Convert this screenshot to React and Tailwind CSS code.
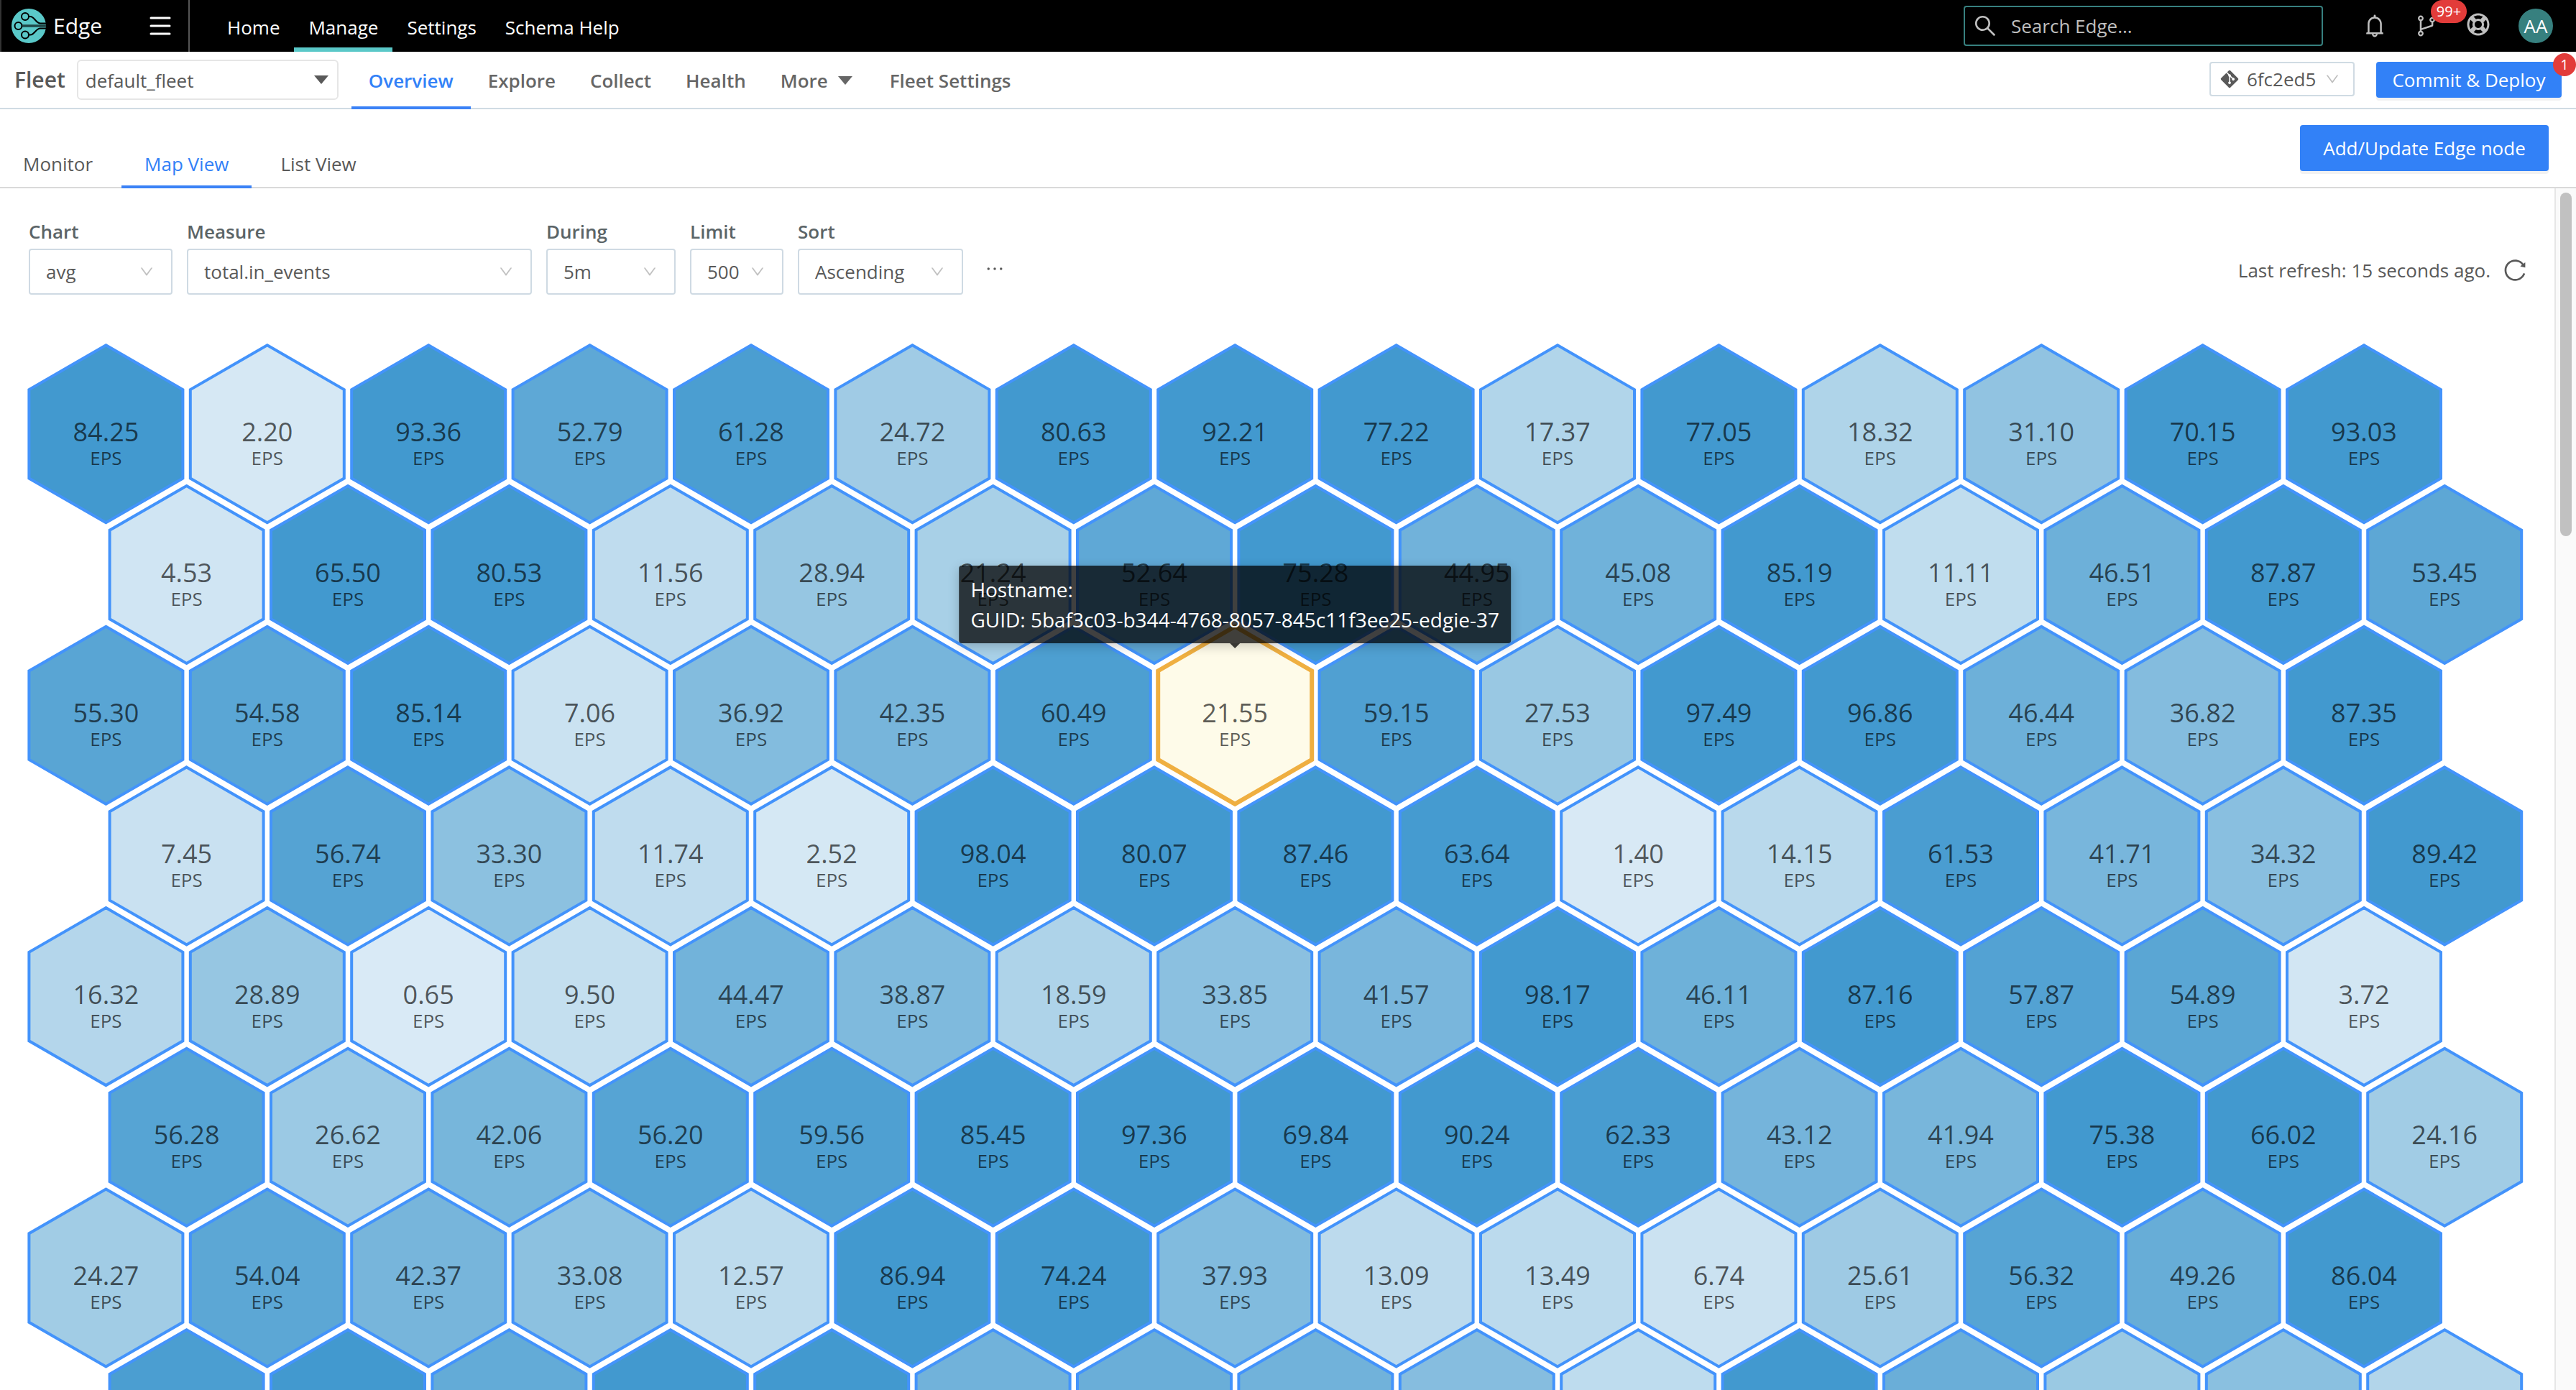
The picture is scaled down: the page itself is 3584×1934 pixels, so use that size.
import {
  AiOutlineBell,
  AiOutlineBranches,
  AiOutlineDown,
  AiOutlineEllipsis,
  AiOutlineReload,
  AiOutlineSearch,
} from 'react-icons/ai'
import { FaGitAlt, FaRegLifeRing } from 'react-icons/fa'

const NAV = ['Home', 'Manage', 'Settings', 'Schema Help']

const FLEET_TABS = ['Overview', 'Explore', 'Collect', 'Health']

const VIEW_TABS = ['Monitor', 'Map View', 'List View']

const FILTERS = [
  { id: 'chart', label: 'Chart', value: 'avg', width: 'w-[200px]' },
  { id: 'measure', label: 'Measure', value: 'total.in_events', width: 'w-[480px]' },
  { id: 'during', label: 'During', value: '5m', width: 'w-[180px]' },
  { id: 'limit', label: 'Limit', value: '500', width: 'w-[130px]' },
  { id: 'sort', label: 'Sort', value: 'Ascending', width: 'w-[230px]' },
]

const NODES = [
  [84.25, 2.2, 93.36, 52.79, 61.28, 24.72, 80.63, 92.21, 77.22, 17.37, 77.05, 18.32, 31.1, 70.15, 93.03],
  [4.53, 65.5, 80.53, 11.56, 28.94, 21.24, 52.64, 75.28, 44.95, 45.08, 85.19, 11.11, 46.51, 87.87, 53.45],
  [55.3, 54.58, 85.14, 7.06, 36.92, 42.35, 60.49, 21.55, 59.15, 27.53, 97.49, 96.86, 46.44, 36.82, 87.35],
  [7.45, 56.74, 33.3, 11.74, 2.52, 98.04, 80.07, 87.46, 63.64, 1.4, 14.15, 61.53, 41.71, 34.32, 89.42],
  [16.32, 28.89, 0.65, 9.5, 44.47, 38.87, 18.59, 33.85, 41.57, 98.17, 46.11, 87.16, 57.87, 54.89, 3.72],
  [56.28, 26.62, 42.06, 56.2, 59.56, 85.45, 97.36, 69.84, 90.24, 62.33, 43.12, 41.94, 75.38, 66.02, 24.16],
  [24.27, 54.04, 42.37, 33.08, 12.57, 86.94, 74.24, 37.93, 13.09, 13.49, 6.74, 25.61, 56.32, 49.26, 86.04],
]

// next row only peeks in below the fold, so it is drawn without labels
const PEEK_ROW = [61, 80, 51, 85, 67, 45, 48, 45, 36, 12, 78, 48, 27, 34, 17]

const ACTIVE = { row: 2, col: 7 }

// map geometry, in viewBox units
const COL_STEP = 224.4
const ROW_STEP = 195.7
const HALF_W = 107
const RADIUS = 123.5
const MAP_W = 3473
const MAP_H = 1630

const COLOR_STOPS = [
  [0, [219, 235, 246]],
  [24.2, [161, 204, 229]],
  [65, [66, 153, 207]],
]

function colorFor(value) {
  const last = COLOR_STOPS[COLOR_STOPS.length - 1]
  if (value >= last[0]) return `rgb(${last[1].join(',')})`
  const i = COLOR_STOPS.findIndex(([stop]) => stop > value)
  const [from, a] = COLOR_STOPS[i - 1]
  const [to, b] = COLOR_STOPS[i]
  const t = (value - from) / (to - from)
  return `rgb(${a.map((c, k) => Math.round(c + (b[k] - c) * t)).join(',')})`
}

function centerOf(row, col) {
  return {
    x: 109.4 + (row % 2) * (COL_STEP / 2) + col * COL_STEP,
    y: 125.8 + row * ROW_STEP,
  }
}

function hexPoints(x, y) {
  const h = RADIUS / 2
  return [
    [x, y - RADIUS],
    [x + HALF_W, y - h],
    [x + HALF_W, y + h],
    [x, y + RADIUS],
    [x - HALF_W, y + h],
    [x - HALF_W, y - h],
  ]
    .map((p) => p.join(','))
    .join(' ')
}

function Hexagon({ value, row, col, labelled = true }) {
  const { x, y } = centerOf(row, col)
  const active = row === ACTIVE.row && col === ACTIVE.col
  return (
    <g>
      <polygon
        points={hexPoints(x, y)}
        fill={active ? '#fefbe9' : colorFor(value)}
        stroke={active ? '#efaf41' : '#4393fb'}
        strokeWidth={active ? 6 : 4}
      />
      {labelled && (
        <>
          <text x={x} y={y + 10} textAnchor="middle" fontSize="36" fillOpacity="0.65">
            {value.toFixed(2)}
          </text>
          <text x={x} y={y + 43} textAnchor="middle" fontSize="26" fillOpacity="0.65">
            EPS
          </text>
        </>
      )}
    </g>
  )
}

function NodeMap() {
  const anchor = centerOf(ACTIVE.row, ACTIVE.col)
  return (
    <div className="relative">
      <svg
        viewBox={`0 0 ${MAP_W} ${MAP_H}`}
        className="block w-full"
        role="img"
        aria-label="Edge nodes by events per second"
      >
        {NODES.map((values, row) =>
          values.map((value, col) => <Hexagon key={`${row}-${col}`} value={value} row={row} col={col} />)
        )}
        {PEEK_ROW.map((value, col) => (
          <Hexagon key={col} value={value} row={NODES.length} col={col} labelled={false} />
        ))}
      </svg>
      <div
        role="tooltip"
        className="absolute flex -translate-x-1/2 -translate-y-full flex-col items-center"
        style={{
          left: `${(anchor.x / MAP_W) * 100}%`,
          top: `${((anchor.y - 93) / MAP_H) * 100}%`,
        }}
      >
        <div className="rounded-sm bg-black/75 px-4 py-3 text-[28px] leading-[42px] whitespace-nowrap text-white shadow-[0_4px_16px_rgba(0,0,0,0.2)]">
          <p>Hostname:</p>
          <p>GUID: 5baf3c03-b344-4768-8057-845c11f3ee25-edgie-37</p>
        </div>
        <svg viewBox="0 0 14 7" className="h-[7px] w-3.5">
          <path d="M0 0h14L7 7z" fill="#000" fillOpacity="0.75" />
        </svg>
      </div>
    </div>
  )
}

function Logo() {
  return (
    <svg viewBox="0 0 48 48" className="size-12" aria-hidden="true">
      <circle cx="24" cy="24" r="24" fill="#5ac8c8" />
      <g fill="none" stroke="#000" strokeWidth="2">
        <circle cx="19" cy="11" r="5" />
        <circle cx="9.500" cy="24" r="5" />
        <circle cx="19" cy="36.500" r="5" />
        <path d="M24 11h2c6 0 8 9.500 14 9.500h8" />
        <path d="M24 36.500h2c6 0 8-9 14-9h8" />
      </g>
      <path d="M14.500 22.500H48v3H14.500z" />
      <path d="M15 24h33" stroke="#3f8f8f" strokeWidth="1" />
    </svg>
  )
}

function Caret({ className }) {
  return (
    <svg viewBox="0 0 20 12" className={className} aria-hidden="true">
      <path d="M0 0h20L10 12z" fill="currentColor" />
    </svg>
  )
}

function TopBar() {
  return (
    <header className="flex h-[72px] shrink-0 items-center bg-black pr-8 text-white">
      <div className="flex h-full w-[264px] items-center border-r-2 border-l-2 border-[#555] border-l-[#333] pr-6 pl-3.5">
        <Logo />
        <span className="ml-2.5 text-[30px]">Edge</span>
        <button type="button" aria-label="Menu" className="ml-auto">
          <svg viewBox="0 0 30 26" className="h-[26px] w-[30px]" stroke="#fff" strokeWidth="3" strokeLinecap="round">
            <path d="M2 2h26M2 13h26M2 24h26" />
          </svg>
        </button>
      </div>
      <nav className="ml-8 flex h-full">
        {NAV.map((item) => (
          <a
            key={item}
            href="#"
            className={`flex items-center border-y-6 border-t-transparent px-5 ${
              item === 'Manage' ? 'border-b-[#5ac8c8]' : 'border-b-transparent'
            }`}
          >
            <span className="pt-1">{item}</span>
          </a>
        ))}
      </nav>
      <label className="ml-auto flex h-14 w-[500px] items-center gap-[18px] rounded-sm border-2 border-[#37807f] pl-2.5 text-[#bfbfbf]">
        <AiOutlineSearch className="size-9" />
        <input
          type="search"
          aria-label="Search Edge"
          placeholder="Search Edge..."
          className="min-w-0 flex-1 outline-none placeholder:text-[#bfbfbf]"
        />
      </label>
      <div className="ml-14 flex items-center gap-10 text-[#bfbfbf]">
        <button type="button" aria-label="Notifications" className="flex size-8 items-center justify-center">
          <AiOutlineBell className="size-9 shrink-0" />
        </button>
        <button type="button" aria-label="Changes" className="relative flex size-8 items-center justify-center">
          <AiOutlineBranches className="size-9 shrink-0" />
          <span className="absolute -top-5 left-[22px] flex h-8 w-[50px] items-center justify-center rounded-full bg-[#e23c3a] text-xl text-white">
            99+
          </span>
        </button>
        <button type="button" aria-label="Help" className="flex size-8 items-center justify-center pb-1">
          <FaRegLifeRing className="size-8 shrink-0" />
        </button>
        <button type="button" className="flex size-12 items-center justify-center rounded-full bg-[#37807f] text-white">
          AA
        </button>
      </div>
    </header>
  )
}

function FleetBar() {
  return (
    <div className="flex h-20 shrink-0 items-stretch border-b-2 border-[#d0dbe3] pr-5 pl-5">
      <label htmlFor="fleet" className="flex items-center text-[30px] font-semibold">
        Fleet
      </label>
      <div className="relative my-auto ml-4">
        <select
          id="fleet"
          className="h-14 w-[364px] appearance-none rounded-md border-2 border-[#e6e6e6] bg-white pt-0.5 pl-2.5"
        >
          <option>default_fleet</option>
        </select>
        <Caret className="pointer-events-none absolute top-[22px] right-3.5 h-3 w-5" />
      </div>
      <nav className="-mb-0.5 ml-[18px] flex font-semibold text-[#666]">
        {FLEET_TABS.map((tab) => (
          <a
            key={tab}
            href="#"
            className={`flex items-center border-y-4 border-t-transparent px-6 ${
              tab === 'Overview' ? 'border-b-[#3b82f6] text-[#3281f7]' : 'border-b-transparent'
            }`}
          >
            {tab}
          </a>
        ))}
        <button type="button" className="flex items-center gap-3.5 px-6 font-semibold">
          More
          <Caret className="h-3 w-5" />
        </button>
        <a href="#" className="ml-1 flex items-center px-6">
          Fleet Settings
        </a>
      </nav>
      <div className="mt-3.5 ml-auto flex items-start gap-[30px]">
        <button type="button" className="flex h-12 w-[202px] items-center rounded-sm border-2 border-[#d0dbe3] pl-3">
          <FaGitAlt className="size-7" />
          <span className="ml-2.5">6fc2ed5</span>
          <AiOutlineDown className="ml-3 size-[22px] text-[#bfbfbf]" />
        </button>
        <button
          type="button"
          className="relative flex h-[50px] w-[258px] items-center justify-center rounded-sm bg-[#3281f7] text-white shadow-[0_4px_0_#f2f2f2]"
        >
          Commit &amp; Deploy
          <span className="absolute -top-3 -right-5 flex size-8 items-center justify-center rounded-full bg-[#e23c3a] text-xl">
            1
          </span>
        </button>
      </div>
    </div>
  )
}

function ViewTabs() {
  return (
    <div className="flex h-[110px] shrink-0 items-end justify-between border-b-2 border-[#d9d9d9] pr-[38px]">
      <nav className="-mb-0.5 flex gap-2">
        {VIEW_TABS.map((tab) => (
          <a
            key={tab}
            href="#"
            className={`flex h-16 items-center border-b-4 px-8 ${
              tab === 'Map View' ? 'border-[#3b82f6] text-[#3281f7]' : 'border-transparent'
            }`}
          >
            {tab}
          </a>
        ))}
      </nav>
      <button
        type="button"
        className="mb-[22px] flex h-16 w-[346px] items-center justify-center rounded-sm bg-[#3281f7] text-white shadow-[0_4px_0_#f2f2f2]"
      >
        Add/Update Edge node
      </button>
    </div>
  )
}

function Filters() {
  return (
    <div className="flex items-end gap-5">
      {FILTERS.map((filter) => (
        <div key={filter.id} className="flex flex-col gap-1.5">
          <label htmlFor={filter.id} className="leading-9 font-semibold text-[#5b6467]">
            {filter.label}
          </label>
          <div className="relative">
            <select
              id={filter.id}
              className={`h-16 appearance-none rounded-sm border-2 border-[#cfdae3] bg-white pl-[22px] ${filter.width}`}
            >
              <option>{filter.value}</option>
            </select>
            <AiOutlineDown className="pointer-events-none absolute top-[21px] right-[25px] size-[22px] text-[#bfbfbf]" />
          </div>
        </div>
      ))}
      <button type="button" aria-label="More filters" className="mb-5 ml-2">
        <AiOutlineEllipsis className="size-8" />
      </button>
      <div className="-mr-1.5 mb-4 ml-auto flex items-center gap-4">
        <span>Last refresh: 15 seconds ago.</span>
        <button type="button" aria-label="Refresh">
          <AiOutlineReload className="size-9" />
        </button>
      </div>
    </div>
  )
}

export default function App() {
  return (
    <div className="flex h-screen flex-col overflow-hidden bg-white font-['Open_Sans',sans-serif] text-[26px] leading-9 text-[#595959]">
      <TopBar />
      <FleetBar />
      <ViewTabs />
      <div className="flex min-h-0 flex-1">
        <main className="min-w-0 flex-1 overflow-hidden pt-[42px] pr-[43px] pl-10">
          <Filters />
          <div className="mt-[68px] -ml-0.5 text-black">
            <NodeMap />
          </div>
        </main>
        <div className="w-[30px] shrink-0 border-l-2 border-[#e6e6e6] bg-[#fafafa] pt-1.5 pl-1.5">
          <div className="h-[478px] w-4 rounded-full bg-[#c1c1c1]" />
        </div>
      </div>
    </div>
  )
}
